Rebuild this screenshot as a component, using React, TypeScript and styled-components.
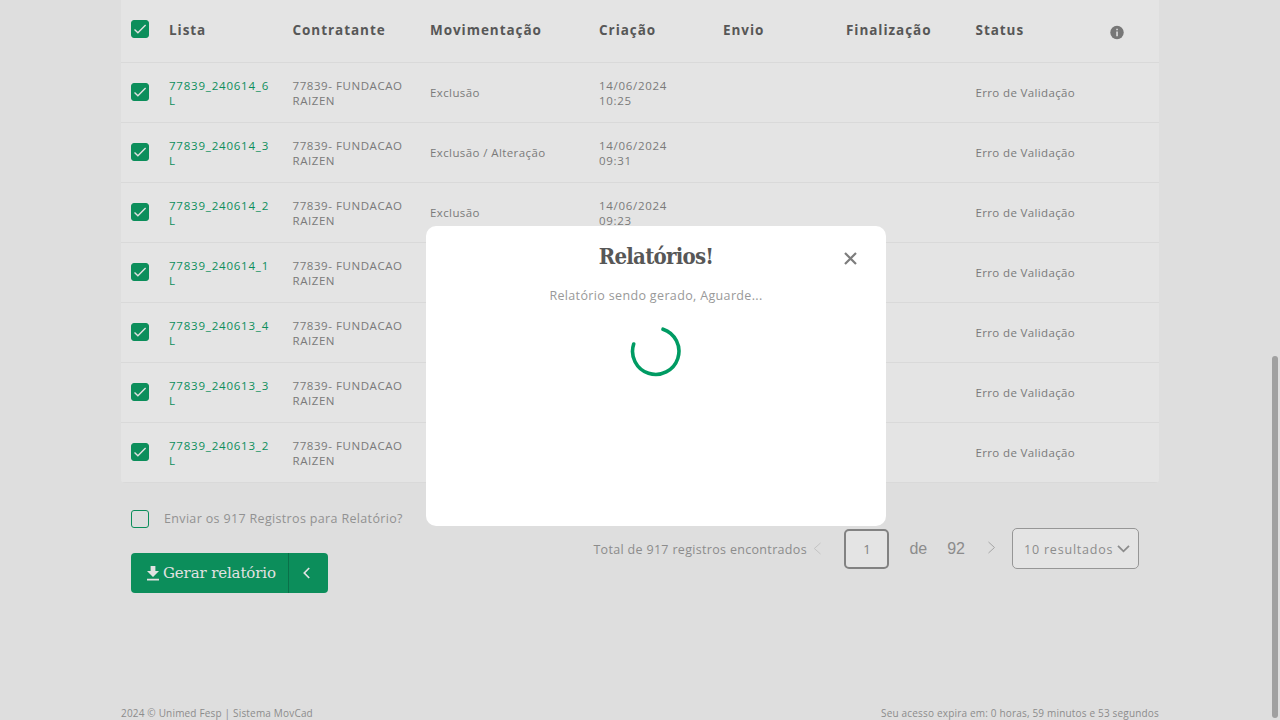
import React from "react";
import styled, { createGlobalStyle } from "styled-components";

const GlobalStyle = createGlobalStyle`
  * { box-sizing: border-box; }
  body { margin: 0; background: #dedede; overflow: hidden; }
`;

const sans = `"Open Sans", "Noto Sans", sans-serif`;
const slab = `"DejaVu Serif", serif`;
const slabNarrow = `"DejaVu Serif Condensed", "DejaVu Serif", serif`;
const green = "#0c8e5b";

const Page = styled.div`
  position: relative;
  width: 1280px;
  height: 720px;
  overflow: hidden;
  background: #dedede;
  font-family: ${sans};
  color: #8c8c8c;
`;

const Container = styled.div`
  width: 1038px;
  height: 720px;
  margin-left: 121px;
  display: flex;
  flex-direction: column;
`;

const Table = styled.div`
  background: #e4e4e4;
  border-radius: 0 0 4px 4px;
  overflow: hidden;
`;

const Row = styled.div<{ $head?: boolean }>`
  display: grid;
  grid-template-columns: 38px 123.5px 137.5px 169px 124px 123px 129.5px 134.5px 1fr;
  align-items: center;
  height: ${(p) => (p.$head ? 63 : 60)}px;
  border-bottom: 1px solid #d9d9d9;
  padding-bottom: ${(p) => (p.$head ? 3 : 0)}px;
`;

const HeadCell = styled.div`
  padding-left: 10px;
  font-size: 13.5px;
  line-height: 20px;
  font-weight: 700;
  letter-spacing: 0.95px;
  color: #575757;
  white-space: nowrap;
`;

const Cell = styled.div<{ $spacing?: number; $link?: boolean }>`
  padding-left: 10px;
  font-size: 11.5px;
  line-height: 15px;
  letter-spacing: ${(p) => p.$spacing ?? 0.4}px;
  color: ${(p) => (p.$link ? green : "#7a7a7a")};
  white-space: pre;
`;

const CheckCell = styled.div`
  padding: 0 0 1px 10px;
`;

const Box = styled.span<{ $checked?: boolean }>`
  display: flex;
  align-items: center;
  justify-content: center;
  width: 18px;
  height: 18px;
  border: 1px solid ${green};
  border-radius: 3px;
  background: ${(p) => (p.$checked ? green : "transparent")};
`;

const Actions = styled.div`
  display: flex;
  justify-content: space-between;
  padding: 26px 20px 0 10px;
`;

const SendAll = styled.label`
  display: flex;
  align-items: center;
  gap: 15px;
  height: 19px;
  font-size: 12.5px;
  letter-spacing: 0.34px;
  color: #929292;
  white-space: nowrap;
`;

const SplitButton = styled.div`
  display: flex;
  width: 197px;
  height: 40px;
  margin-top: 25px;
  border-radius: 4px;
  background: ${green};
  color: #e2e2e2;
`;

const MainButton = styled.div`
  display: flex;
  align-items: center;
  width: 158px;
  padding-left: 16px;
  gap: 4px;
  border-right: 1px solid #0a7049;
  font-family: ${slab};
  font-size: 15px;
  letter-spacing: -0.13px;
  white-space: nowrap;
`;

const ToggleButton = styled.div`
  flex: 1;
  display: flex;
  align-items: center;
  justify-content: center;
  padding-right: 3px;
`;

const Pager = styled.div`
  display: flex;
  align-items: center;
  height: 41px;
  margin-top: 19px;
  white-space: nowrap;
`;

const Total = styled.span`
  width: 213px;
  font-size: 12.5px;
  letter-spacing: 0.32px;
  margin-right: 7px;
  padding-top: 1px;
`;

const PageInput = styled.div`
  display: flex;
  align-items: center;
  justify-content: center;
  width: 45px;
  height: 40px;
  margin: 1px 0 0 22px;
  border: 2px solid #828282;
  border-radius: 5px;
  background: #e4e4e4;
  font-size: 13px;
  color: #828282;
`;

const PageText = styled.span`
  margin-left: 20px;
  font-family: "Liberation Sans", Arial, sans-serif;
  font-size: 16px;
`;

const Select = styled.div`
  display: flex;
  align-items: center;
  justify-content: space-between;
  width: 127px;
  height: 41px;
  margin-left: 16px;
  padding: 1px 8px 0 11px;
  border: 1px solid #969696;
  border-radius: 5px;
  background: #e4e4e4;
  font-size: 12.5px;
  letter-spacing: 0.8px;
`;

const Footer = styled.footer`
  display: flex;
  justify-content: space-between;
  margin-top: 113px;
  font-size: 10px;
  line-height: 14px;
  letter-spacing: 0.18px;
  white-space: nowrap;
`;

const Modal = styled.div`
  position: absolute;
  left: 426px;
  top: 226px;
  width: 460px;
  height: 300px;
  border-radius: 10px;
  background: #fff;
  display: flex;
  flex-direction: column;
  align-items: center;
  padding-top: 14px;
`;

const Title = styled.h2`
  margin: 0;
  font-family: ${slabNarrow};
  font-size: 22px;
  line-height: 32px;
  font-weight: 700;
  letter-spacing: -0.75px;
  color: #575757;
`;

const Message = styled.p`
  margin: 14px 0 20px;
  font-size: 12.5px;
  line-height: 20px;
  letter-spacing: 0.35px;
  color: #999;
  white-space: nowrap;
`;

const CloseButton = styled.span`
  position: absolute;
  top: 26px;
  right: 29px;
  display: flex;
`;

const Thumb = styled.div`
  position: absolute;
  right: 2px;
  top: 356px;
  width: 6px;
  height: 362px;
  border-radius: 3px;
  background: #a0a0a0;
`;

const InfoIcon = styled.svg`
  display: block;
  margin-top: 5px;
`;

const Chevron = ({ d, w, h, color, sw }: { d: string; w: number; h: number; color: string; sw: number }) => (
  <svg width={w} height={h} viewBox={`0 0 ${w} ${h}`} fill="none" stroke={color} strokeWidth={sw}>
    <path d={d} />
  </svg>
);

const Check = ({ checked = true }: { checked?: boolean }) => (
  <Box $checked={checked}>
    {checked && (
      <svg width="14" height="12" viewBox="0 0 14 12" fill="none" stroke="#e0e0e0" strokeWidth="1.4">
        <path d="M1.5 6.4 4.9 9.7 12.6 2" />
      </svg>
    )}
  </Box>
);

const rows = [
  ["77839_240614_6", "Exclusão", "14/06/2024\n10:25"],
  ["77839_240614_3", "Exclusão / Alteração", "14/06/2024\n09:31"],
  ["77839_240614_2", "Exclusão", "14/06/2024\n09:23"],
  ["77839_240614_1", "", ""],
  ["77839_240613_4", "", ""],
  ["77839_240613_3", "", ""],
  ["77839_240613_2", "", ""],
];

const heads = ["Lista", "Contratante", "Movimentação", "Criação", "Envio", "Finalização", "Status"];

export default function App() {
  return (
    <Page>
      <GlobalStyle />
      <Container>
        <Table>
          <Row $head>
            <CheckCell><Check /></CheckCell>
            {heads.map((h) => <HeadCell key={h}>{h}</HeadCell>)}
            <HeadCell>
              <InfoIcon width="14" height="15" viewBox="0 0 15 15">
                <circle cx="7.5" cy="7.5" r="7.2" fill="#777" />
                <path d="M6.7 3.6h1.7v1.6H6.7zM6.7 6.4h1.7v5H6.7z" fill="#dedede" />
              </InfoIcon>
            </HeadCell>
          </Row>
          {rows.map(([id, move, created]) => (
            <Row key={id}>
              <CheckCell><Check /></CheckCell>
              <Cell $link $spacing={0.79}>{id + "\nL"}</Cell>
              <Cell $spacing={0.56}>{"77839- FUNDACAO\nRAIZEN"}</Cell>
              <Cell>{move}</Cell>
              <Cell $spacing={0.7}>{created}</Cell>
              <Cell />
              <Cell />
              <Cell $spacing={0.36}>Erro de Validação</Cell>
              <Cell />
            </Row>
          ))}
        </Table>
        <Actions>
          <div>
            <SendAll><Check checked={false} />Enviar os 917 Registros para Relatório?</SendAll>
            <SplitButton>
              <MainButton>
                <svg width="12" height="15" viewBox="0 0 12 15" fill="#e2e2e2">
                  <path d="M3.6 0h4.8v5H12L6 11 0 5h3.6zM0 12.8h12v1.7H0z" />
                </svg>
                Gerar relatório
              </MainButton>
              <ToggleButton><Chevron d="M6.2 1 1.3 6l4.9 5" w={8} h={12} color="#e2e2e2" sw={1.7} /></ToggleButton>
            </SplitButton>
          </div>
          <Pager>
            <Total>Total de 917 registros encontrados</Total>
            <Chevron d="M7.5 1 1.3 6.5l6.2 5.5" w={9} h={13} color="#c4c4c4" sw={1} />
            <PageInput>1</PageInput>
            <PageText>de</PageText>
            <PageText>92</PageText>
            <PageText><Chevron d="M3.5 1 9.5 6.5l-6 5.5" w={11} h={13} color="#a5a5a5" sw={1} /></PageText>
            <Select>
              10 resultados
              <Chevron d="M1 .8 6.5 6.3 12 .8" w={13} h={9} color="#8c8c8c" sw={1.8} />
            </Select>
          </Pager>
        </Actions>
        <Footer>
          <span>2024 © Unimed Fesp | Sistema MovCad</span>
          <span>Seu acesso expira em: 0 horas, 59 minutos e 53 segundos</span>
        </Footer>
      </Container>
      <Modal>
        <Title>Relatórios!</Title>
        <CloseButton>
          <Chevron d="M1 1 12 12M12 1 1 12" w={13} h={13} color="#7d7d7d" sw={2.2} />
        </CloseButton>
        <Message>Relatório sendo gerado, Aguarde...</Message>
        <svg width="52" height="52" viewBox="0 0 52 52" fill="none" stroke="#009b63" strokeWidth="3.6" strokeLinecap="round">
          <path d="M33 3.2A23.2 23.2 0 1 1 3.7 18" />
        </svg>
      </Modal>
      <Thumb />
    </Page>
  );
}
